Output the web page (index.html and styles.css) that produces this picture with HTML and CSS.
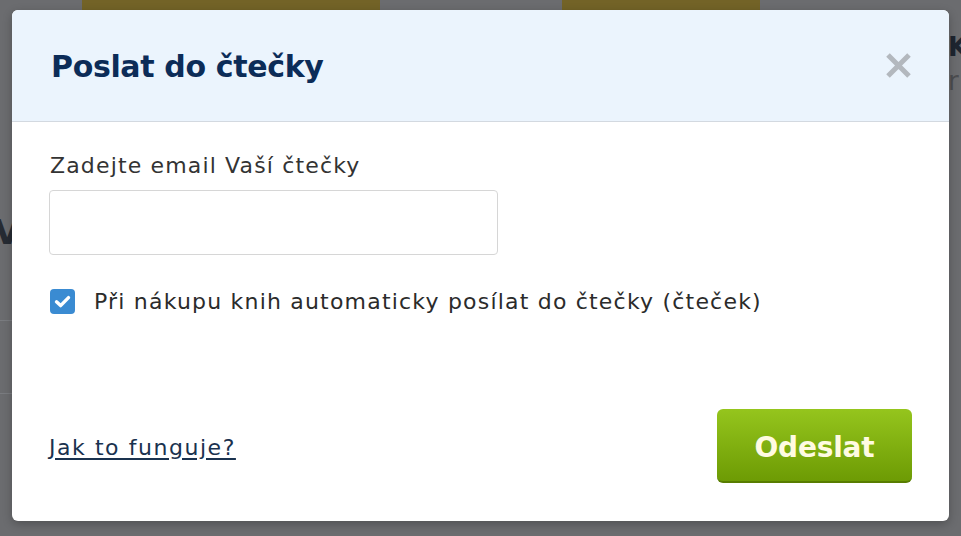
FILE: index.html
```html
<!DOCTYPE html>
<html lang="cs">
<head>
<meta charset="utf-8">
<title>Poslat do čtečky</title>
<link rel="stylesheet" href="styles.css">
</head>
<body>
<div class="page">
  <div class="topbar">
    <div class="promo promo-a"></div>
    <div class="promo promo-b"></div>
  </div>
  <div class="side-k">K<br><span class="side-r">r</span></div>
  <div class="left-v">V</div>
  <div class="row-line row-1"></div>
  <div class="row-line row-2"></div>
</div>

<div class="modal" role="dialog">
  <div class="modal-header">
    <h2 class="modal-title">Poslat do čtečky</h2>
    <button class="close" aria-label="Zavřít">
      <svg width="27" height="27" viewBox="0 0 27 27"><path d="M3 3 L24 24 M24 3 L3 24" stroke="#b3b8be" stroke-width="5" stroke-linecap="butt"/></svg>
    </button>
  </div>
  <div class="modal-body">
    <label class="label" for="email">Zadejte email Vaší čtečky</label>
    <input class="input" id="email" type="text">
    <div class="check-row">
      <span class="checkbox">
        <svg width="25" height="25" viewBox="0 0 25 25"><path d="M6.5 12.8 L10.6 16.6 L18.5 8.6" fill="none" stroke="#fff" stroke-width="3.4" stroke-linecap="round" stroke-linejoin="round"/></svg>
      </span>
      <span class="check-text">Při nákupu knih automaticky posílat do čtečky (čteček)</span>
    </div>
    <div class="footer">
      <a class="help" href="#">Jak to funguje?</a>
      <button class="send">Odeslat</button>
    </div>
  </div>
</div>
</body>
</html>
```
FILE: styles.css
```css
html, body {
  margin: 0;
  padding: 0;
}
body {
  width: 961px;
  height: 536px;
  overflow: hidden;
  background: #6b6c6f;
  font-family: "DejaVu Sans", Verdana, sans-serif;
  position: relative;
}
.page {
  position: relative;
  height: 536px;
}
.topbar {
  display: flex;
  height: 10px;
  padding-left: 82px;
  gap: 182px;
}
.promo {
  height: 10px;
  background: #736327;
}
.promo-a { width: 298px; }
.promo-b { width: 198px; }
.side-k {
  position: absolute;
  left: 948px;
  top: 30px;
  font-size: 26px;
  font-weight: bold;
  color: #1e2530;
  line-height: 34px;
}
.side-r {
  font-weight: normal;
  color: #4c4d50;
}
.left-v {
  position: absolute;
  left: -6px;
  top: 212px;
  font-size: 34px;
  font-weight: bold;
  color: #262b33;
}
.row-line {
  position: absolute;
  left: 0;
  width: 12px;
  height: 1px;
  background: #7a7c80;
}
.row-1 { top: 320px; }
.row-2 { top: 393px; }

.modal {
  position: absolute;
  left: 12px;
  top: 10px;
  width: 937px;
  height: 511px;
  background: #fff;
  border-radius: 6px;
  overflow: hidden;
  display: flex;
  flex-direction: column;
  box-shadow: 0 3px 10px rgba(0,0,0,0.25);
}
.modal-header {
  height: 111px;
  flex: none;
  background: #ebf4fd;
  border-bottom: 1px solid #d3d9e0;
  display: flex;
  align-items: center;
  justify-content: space-between;
  padding: 0 37px 0 39px;
}
.modal-title {
  margin: 0;
  font-size: 30px;
  letter-spacing: -0.35px;
  font-weight: bold;
  color: #0c2c58;
  padding-top: 1px;
}
.close {
  border: 0;
  background: none;
  padding: 0;
  width: 27px;
  height: 27px;
  display: flex;
}
.modal-body {
  flex: 1;
  display: flex;
  flex-direction: column;
  padding: 31px 37px 38px 37px;
}
.label {
  font-size: 22px;
  line-height: 26px;
  letter-spacing: 1.15px;
  color: #333;
  margin-left: 1px;
}
.input {
  margin-top: 11px;
  width: 449px;
  height: 65px;
  box-sizing: border-box;
  border: 1px solid #d6d6d6;
  border-radius: 4px;
  background: #fff;
  font-family: inherit;
  font-size: 20px;
}
.check-row {
  display: flex;
  align-items: center;
  gap: 19px;
  margin-top: 34px;
  margin-left: 1px;
}
.checkbox {
  width: 25px;
  height: 25px;
  border-radius: 4px;
  background: #3a8bd2;
  display: flex;
}
.check-text {
  font-size: 22px;
  line-height: 25px;
  letter-spacing: 1.2px;
  color: #2b2b2b;
  margin-top: -1px;
}
.footer {
  margin-top: auto;
  display: flex;
  justify-content: space-between;
  align-items: center;
}
.help {
  font-size: 22px;
  letter-spacing: 1.55px;
  color: #1a324f;
  text-decoration: underline;
  text-underline-offset: 3px;
  margin-top: 2px;
}
.send {
  width: 195px;
  height: 74px;
  border: 0;
  border-bottom: 2px solid #587d00;
  border-radius: 6px;
  background: linear-gradient(#95c51d, #6d9b04);
  color: #fffbe2;
  font-family: "DejaVu Sans", Verdana, sans-serif;
  font-size: 28px;
  letter-spacing: -0.2px;
  font-weight: bold;
  padding: 4px 0 0 0;
}
```
